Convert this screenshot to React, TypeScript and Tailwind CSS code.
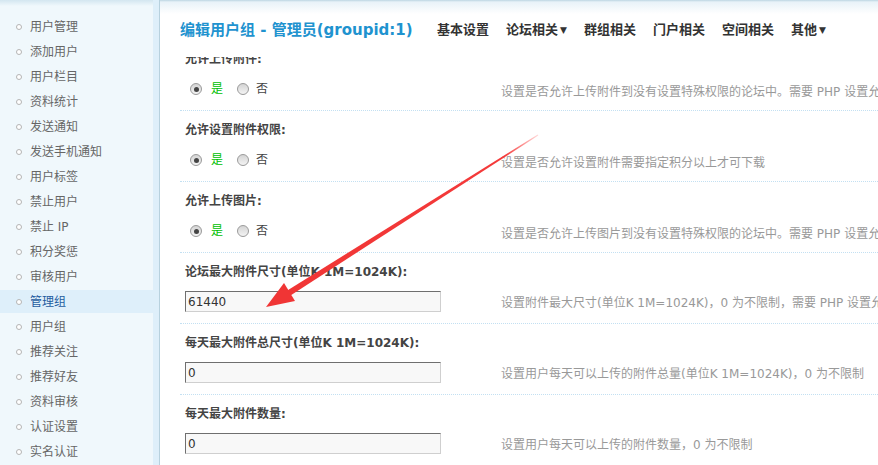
import React from "react";

const menu = [
  "用户管理",
  "添加用户",
  "用户栏目",
  "资料统计",
  "发送通知",
  "发送手机通知",
  "用户标签",
  "禁止用户",
  "禁止 IP",
  "积分奖惩",
  "审核用户",
  "管理组",
  "用户组",
  "推荐关注",
  "推荐好友",
  "资料审核",
  "认证设置",
  "实名认证",
];

const nav = [
  { label: "基本设置" },
  { label: "论坛相关", drop: true },
  { label: "群组相关" },
  { label: "门户相关" },
  { label: "空间相关" },
  { label: "其他", drop: true },
];

type Row =
  | { kind: "radio"; label: string; desc: string }
  | { kind: "input"; label: string; value: string; desc: string };

const rows: Row[] = [
  {
    kind: "radio",
    label: "允许上传附件:",
    desc: "设置是否允许上传附件到没有设置特殊权限的论坛中。需要 PHP 设置允许才能上传附件",
  },
  {
    kind: "radio",
    label: "允许设置附件权限:",
    desc: "设置是否允许设置附件需要指定积分以上才可下载",
  },
  {
    kind: "radio",
    label: "允许上传图片:",
    desc: "设置是否允许上传图片到没有设置特殊权限的论坛中。需要 PHP 设置允许才能上传图片",
  },
  {
    kind: "input",
    label: "论坛最大附件尺寸(单位K 1M=1024K):",
    value: "61440",
    desc: "设置附件最大尺寸(单位K 1M=1024K)，0 为不限制，需要 PHP 设置允许才能上传附件",
  },
  {
    kind: "input",
    label: "每天最大附件总尺寸(单位K 1M=1024K):",
    value: "0",
    desc: "设置用户每天可以上传的附件总量(单位K 1M=1024K)，0 为不限制",
  },
  {
    kind: "input",
    label: "每天最大附件数量:",
    value: "0",
    desc: "设置用户每天可以上传的附件数量，0 为不限制",
  },
];

function Radio({ checked }: { checked?: boolean }) {
  return (
    <span className="flex h-[12px] w-[12px] items-center justify-center rounded-full border border-[#9a9a9a] bg-[linear-gradient(#d4d4d4,#f4f4f4)]">
      {checked && <span className="h-[5px] w-[5px] rounded-full bg-[#444]" />}
    </span>
  );
}

function Sidebar() {
  return (
    <div className="flex h-full w-[160px] shrink-0 border-r border-[#b7d1de] bg-[#deeffa]">
      <div className="h-full w-[153px] bg-[linear-gradient(#d3e6f0_0px,#f0f8fc_6px,#f0f8fc_100%)] pt-[15px]">
        {menu.map((m) => {
          const active = m === "管理组";
          return (
            <div
              key={m}
              className={
                "mb-[2px] flex h-[23px] items-center pt-[1px] pl-[16px] text-[12px] " +
                (active ? "w-[159px] bg-[#deeffa] text-[#1f5c9f]" : "text-[#666]")
              }
            >
              <span className="mr-[8px] h-[6px] w-[6px] rounded-full border border-[#b5b5b5] bg-white" />
              {m}
            </div>
          );
        })}
      </div>
    </div>
  );
}

function Header() {
  return (
    <div className="flex h-[57px] shrink-0 items-start bg-[linear-gradient(#bcd5e2_0px,#e8f2f8_2px,#ffffff_14px)] pt-[20px] pl-[20px]">
      <div className="w-[257px] text-[15px] leading-[20px] font-bold text-[#1f93cf]">
        编辑用户组 - 管理员(groupid:1)
      </div>
      <div className="flex gap-[17px] text-[13px] leading-[20px] font-bold text-[#333]">
        {nav.map((n) => (
          <span key={n.label} className="flex items-center">
            {n.label}
            {n.drop && <span className="ml-[2px] text-[9px]">▼</span>}
          </span>
        ))}
      </div>
    </div>
  );
}

function FormRow({ row }: { row: Row }) {
  return (
    <div className="h-[71px] border-b border-dotted border-[#c3e0f2] pl-[5px]">
      <div className="pt-[12px] text-[12px] leading-[14px] font-bold text-[#444]">{row.label}</div>
      <div className="mt-[13px] flex h-[20px] items-center">
        <div className="flex w-[316px] shrink-0 items-center">
          {row.kind === "radio" ? (
            <div className="flex items-center pl-[5px] text-[12px]">
              <Radio checked />
              <span className="ml-[9px] text-[#00c000]">是</span>
              <span className="ml-[14px]">
                <Radio />
              </span>
              <span className="ml-[7px] text-[#444]">否</span>
            </div>
          ) : (
            <input
              readOnly
              value={row.value}
              className="-mt-[1px] h-[21px] w-[256px] border border-[#cfcfcf] border-t-[#6f6f6f] border-l-[#6f6f6f] bg-[#f8f8f8] px-[2px] text-[12px] text-[#333] outline-none"
            />
          )}
        </div>
        <span
          className={
            "whitespace-nowrap text-[12px] text-[#999] " +
            (row.kind === "radio" ? "mt-[6px]" : "mt-[2px]")
          }
        >
          {row.desc}
        </span>
      </div>
    </div>
  );
}

function Arrow() {
  return (
    <svg
      className="pointer-events-none absolute inset-0"
      width="878"
      height="465"
      viewBox="0 0 878 465"
    >
      <defs>
        <linearGradient id="tail" x1="538" y1="135" x2="266" y2="307" gradientUnits="userSpaceOnUse">
          <stop offset="0" stopColor="#ff4040" stopOpacity="0.2" />
          <stop offset="0.12" stopColor="#f43a3a" stopOpacity="1" />
          <stop offset="1" stopColor="#f03535" />
        </linearGradient>
      </defs>
      <polygon
        points="538.3,135.4 537.7,134.6 287.3,290.5 290.5,295.4"
        fill="url(#tail)"
      />
      <polygon points="266,307 284,283 295,301" fill="#f03535" />
    </svg>
  );
}

export default function App() {
  return (
    <div className="relative flex h-[465px] w-[878px] overflow-hidden bg-white font-['DejaVu_Sans','Noto_Sans_CJK_SC',sans-serif]">
      <Sidebar />
      <div className="flex min-w-0 flex-1 flex-col">
        <Header />
        <div className="min-h-0 flex-1 overflow-hidden">
          <div className="-mt-[17px] ml-[20px]">
            {rows.map((r) => (
              <FormRow key={r.label} row={r} />
            ))}
          </div>
        </div>
      </div>
      <Arrow />
    </div>
  );
}
